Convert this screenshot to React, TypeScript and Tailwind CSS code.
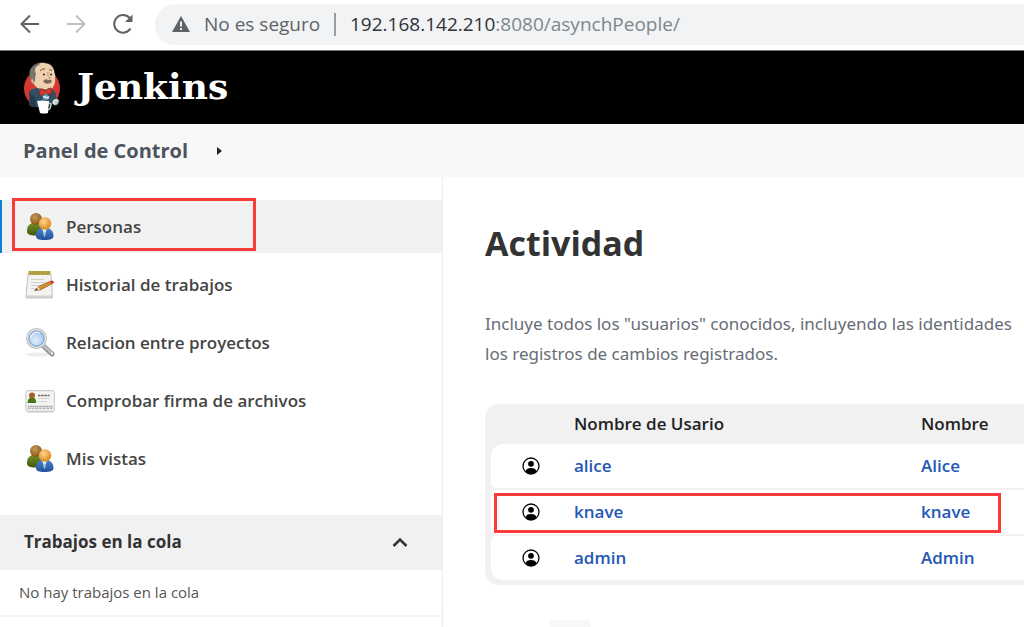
import type { ReactNode } from 'react';

type Task = { label: string; icon: ReactNode; active?: boolean };
type User = { id: string; name: string; highlighted?: boolean };

const PeopleIcon = () => (
  <svg viewBox="0 0 30 30" className="size-[30px] shrink-0" aria-hidden="true">
    <defs>
      <radialGradient id="brownHead" cx="40%" cy="35%" r="65%">
        <stop offset="0" stopColor="#c99a55" />
        <stop offset="1" stopColor="#85561a" />
      </radialGradient>
      <radialGradient id="orangeHead" cx="40%" cy="35%" r="65%">
        <stop offset="0" stopColor="#ffd48a" />
        <stop offset="1" stopColor="#dc8b1c" />
      </radialGradient>
      <linearGradient id="greenBody" x1="0" y1="0" x2="0" y2="1">
        <stop offset="0" stopColor="#73902e" />
        <stop offset="1" stopColor="#3f5a0d" />
      </linearGradient>
      <linearGradient id="blueBody" x1="0" y1="0" x2="0" y2="1">
        <stop offset="0" stopColor="#4f86cc" />
        <stop offset="1" stopColor="#1f519b" />
      </linearGradient>
    </defs>
    <path d="M2 19c0-5 2.500-8 7-8s8 3 8 8c0 3-3 4.500-7.500 4.500S2 22.500 2 19z" fill="url(#greenBody)" />
    <circle cx="11" cy="7" r="6" fill="url(#brownHead)" />
    <path d="M11 24c0-5 3-8.500 8.500-8.500S28.500 19 28.500 24c0 3-3.500 4-9 4s-8.500-1-8.500-4z" fill="url(#blueBody)" />
    <path d="M17 16.500l2.500 7 2.500-7z" fill="#e9f1fb" />
    <path d="M19.500 18l-1 5 1 2 1-2z" fill="#b8cce6" />
    <circle cx="20" cy="11.500" r="6.200" fill="url(#orangeHead)" />
  </svg>
);

const NotepadIcon = () => (
  <svg viewBox="0 0 30 30" className="size-[30px] shrink-0" aria-hidden="true">
    <path d="M3 4h23l1.500 23q0 1-1 1H2q-1 0-1-1z" fill="#f3f3f1" stroke="#c3c3bf" />
    <path d="M1.500 25.500h25.800V28H1.500z" fill="#cfcfcb" />
    <path d="M3.500 1h22v4h-22z" fill="#b9ab4c" />
    <path d="M5 1v3.500M8 1v3.500M11 1v3.500M14 1v3.500M17 1v3.500M20 1v3.500M23 1v3.500" stroke="#9a8e38" />
    <path d="M6 9.500h13M6 12.500h14M6 15.500h9M6 18.500h6" stroke="#d0d1cf" />
    <path d="M9.500 20.500l4-4L26 11l1.500 2.500L15 20z" fill="#d98d32" stroke="#8c5313" strokeWidth=".7" />
    <path d="M9.500 20.500l4-4 1.500 3.500z" fill="#eed3a3" />
    <path d="M9.500 20.500l2.500-2.200.8 1.500z" fill="#333" />
    <path d="M25 11.500l2-1q2 .5 2 2.300l-2 1.200z" fill="#dc3530" />
  </svg>
);

const SearchIcon = () => (
  <svg viewBox="0 0 30 30" className="size-[30px] shrink-0" aria-hidden="true">
    <defs>
      <radialGradient id="glass" cx="45%" cy="60%" r="60%">
        <stop offset="0" stopColor="#e0eefc" />
        <stop offset="1" stopColor="#9abfe9" />
      </radialGradient>
    </defs>
    <ellipse cx="13" cy="26.500" rx="12" ry="2" fill="#ececec" />
    <path d="M18 17.500l9 8.500" stroke="#8c8e8d" strokeWidth="5" strokeLinecap="round" />
    <path d="M19 18l8 7.500" stroke="#bfc1c0" strokeWidth="2.500" strokeLinecap="round" />
    <circle cx="11.500" cy="10.500" r="9" fill="url(#glass)" stroke="#b9bbba" strokeWidth="3" />
    <circle cx="11.500" cy="10.500" r="9" fill="none" stroke="#e2e3e3" strokeWidth="1.400" />
    <circle cx="11.500" cy="10.500" r="7.500" fill="none" stroke="#6d9ed5" strokeWidth=".8" />
    <path d="M6 10a6 6 0 0 1 9-5" fill="none" stroke="#fff" strokeWidth="1.300" opacity=".7" />
    <circle cx="27" cy="25.500" r="1" fill="#fff" />
  </svg>
);

const CardIcon = () => (
  <svg viewBox="0 0 30 30" className="size-[30px] shrink-0" aria-hidden="true">
    <rect x=".8" y="4.500" width="28.800" height="21" rx="2" fill="#ececeb" stroke="#cbcbc9" />
    <path d="M2 26h26.500" stroke="#c9c9c7" />
    <rect x="2" y="6" width="26.500" height="13" fill="#f4f4f3" />
    <path d="M2.500 17c0-3.500 1.500-5.500 4.500-5.500s4.200 2 4.200 5.500z" fill="#4e7418" />
    <circle cx="7" cy="9.500" r="3" fill="#a3651f" />
    <path d="M13 9.500h11.500" stroke="#666" strokeWidth="1.600" strokeDasharray="2.500 .7" />
    <path d="M13.500 12.500h11M13.500 15.500h8" stroke="#d2d2d0" />
    <path d="M3 20.500h24.500" stroke="#9d9d9b" strokeWidth="1.600" strokeDasharray="1.500 .8" />
    <path d="M3 22.300h24.500" stroke="#b0b0ae" strokeWidth="1.300" strokeDasharray="2.500 1.200" />
  </svg>
);

const JenkinsLogo = () => (
  <svg viewBox="0 0 38 52" className="h-[52px] w-[38px] shrink-0" aria-hidden="true">
    <ellipse cx="19" cy="26.500" rx="18" ry="19" fill="#d33833" />
    <path d="M6 30q3-4 9-4l13 1q6 2 5 10l-3 4q-1 4-8 4H10q-3 0-4-3 2-6 0-12z" fill="#2f5064" />
    <path d="M6 31l6 4 1 10q-5 1-6-3z" fill="#213d4e" />
    <path d="M10 20Q6 12 9 6q4-6 12-5 8 0 10 7 2 6 1 12-1 7-7 8l-7-1q-6-1-8-7z" fill="#efd0ae" />
    <path d="M10 21Q5 14 7 8q2-5 8-7l2 1-4 3q-2 3 0 7l-1 4q1 3-2 5z" fill="#77736d" />
    <path d="M7 8q3-6 11-7.500 10-1 13 7" fill="none" stroke="#3e3833" strokeWidth=".7" />
    <path d="M17 9q2-3 5-2M26 8q2-1 3 1" fill="none" stroke="#453728" strokeWidth=".8" />
    <path d="M20 12.500h2M27 12.500h2" stroke="#2c2926" strokeWidth="1.300" />
    <path d="M25 10q-1 4 1 5 3 1 0 2" fill="none" stroke="#a37c5f" strokeWidth=".8" />
    <path d="M20 19q3-3 5-1 3-1 4 1-1 3-4 2.500-3 1-5-2.500z" fill="#7a675a" />
    <path d="M10 17q-3-1-2 2 1 3 3 3" fill="#e3bb96" stroke="#a37c5f" strokeWidth=".7" />
    <path d="M16 28l4 8 5-4 3-4q-5 2-12 0z" fill="#eef2f3" />
    <path d="M17 27q3-1 5 2 3-3 6-3l1 6q-3 1-6-1-3 3-7 2z" fill="#d33833" stroke="#701f1c" strokeWidth=".7" />
    <path d="M19 34q4-3 8 0l-1 4h-6z" fill="#81b0c4" stroke="#203b4b" strokeWidth=".7" />
    <path d="M20 35l2-1 1 2 3-1" fill="none" stroke="#fff" />
    <path d="M14 39q5-1 12 0l-1 12q-4 1-8 0z" fill="#fff" />
    <path d="M26 41l2 1q0 5-3 6" fill="none" stroke="#d9dedf" strokeWidth="1.300" />
    <path d="M30 38q5-3 6 1-1 5-5 4l-2-2z" fill="#e9edee" stroke="#51616b" strokeWidth=".7" />
    <path d="M31 40h4M32 42h3" stroke="#77848b" strokeWidth=".6" />
  </svg>
);

const PersonIcon = () => (
  <svg viewBox="0 0 18 18" className="size-[18px]" aria-hidden="true">
    <circle cx="9" cy="9" r="8" fill="#fff" stroke="#000" strokeWidth="1.300" />
    <circle cx="9" cy="6.800" r="2.900" />
    <path d="M3.400 14.500C4 12 6 11 9 11s5 1 5.600 3.500Q12 17 9 17t-5.600-2.500z" />
  </svg>
);

const TASKS: Task[] = [
  { label: 'Personas', icon: <PeopleIcon />, active: true },
  { label: 'Historial de trabajos', icon: <NotepadIcon /> },
  { label: 'Relacion entre proyectos', icon: <SearchIcon /> },
  { label: 'Comprobar firma de archivos', icon: <CardIcon /> },
  { label: 'Mis vistas', icon: <PeopleIcon /> },
];

const USERS: User[] = [
  { id: 'alice', name: 'Alice' },
  { id: 'knave', name: 'knave', highlighted: true },
  { id: 'admin', name: 'Admin' },
];

const BrowserBar = () => (
  <div className="flex h-[51px] shrink-0 items-center border-b border-[#777] bg-white pb-[2px] text-[#5f6368]">
    <button type="button" aria-label="Atrás" className="ml-5">
      <svg viewBox="0 0 20 20" className="size-5 fill-none stroke-current stroke-2">
        <path d="M19 10H2M10 1.500L1.500 10l8.500 8.500" />
      </svg>
    </button>
    <button type="button" aria-label="Adelante" className="ml-[26px] text-[#bdbfc1]">
      <svg viewBox="0 0 20 20" className="size-5 fill-none stroke-current stroke-2">
        <path d="M1 10h17M10 1.500l8.500 8.500-8.500 8.500" />
      </svg>
    </button>
    <button type="button" aria-label="Recargar" className="ml-[26px]">
      <svg viewBox="0 0 22 22" className="size-[22px]">
        <path d="M18.500 15.500A8.800 8.800 0 1 1 17.600 5" fill="none" stroke="currentColor" strokeWidth="2" />
        <path d="M20.500 1.500v7.500H13z" fill="currentColor" />
      </svg>
    </button>
    <div className="ml-[21px] flex h-[41px] flex-1 items-center rounded-l-full bg-[#f1f3f4] pl-[17px] text-[19px] whitespace-nowrap">
      <svg viewBox="0 0 18 16" className="h-4 w-[18px]" aria-hidden="true">
        <path d="M9 0l9 16H0z" fill="#5f6368" />
        <path d="M9 5.500v5M9 12v2" stroke="#fff" strokeWidth="1.800" />
      </svg>
      <span className="ml-[14px] w-[120px]">No es seguro</span>
      <span className="ml-[10px] h-[23px] w-[2px] bg-[#9a9da0]" />
      <span className="ml-[14px] text-[#80868b]">
        <span className="text-[#303236]">192.168.142.210</span>:8080/asynchPeople/
      </span>
    </div>
  </div>
);

const Sidebar = () => (
  <aside className="w-[443px] shrink-0 border-r border-[#ececec] pt-[23px]">
    <nav className="flex flex-col gap-[5px]">
      {TASKS.map(({ label, icon, active }) => (
        <a
          key={label}
          href="#"
          className={`relative flex h-[53px] items-center gap-[11px] pt-px pl-[25px] text-[17px] font-semibold text-[#444] ${
            active ? 'bg-[#f1f1f1]' : ''
          }`}
        >
          {active && <span className="absolute inset-y-0 left-0 w-[2px] bg-[#0b83d0]" />}
          {icon}
          {label}
          {active && (
            <span className="absolute -top-[2px] left-3 h-[53px] w-[244px] border-3 border-[#fb3a3a]" />
          )}
        </a>
      ))}
    </nav>
    <section className="mt-[30px]">
      <div className="flex h-[55px] items-center justify-between bg-[#f1f1f1] pr-[34px] pb-px pl-6">
        <h2 className="text-[17px] font-bold text-[#333]">Trabajos en la cola</h2>
        <button type="button" aria-label="Contraer">
          <svg viewBox="0 0 16 16" className="size-4 fill-none stroke-[#333] stroke-[2.5]">
            <path d="M1.500 12L8 5.500l6.500 6.500" />
          </svg>
        </button>
      </div>
      <p className="flex h-[47px] items-center border-b-2 border-[#f4f4f4] pl-[19px] text-[15px] text-[#555]">
        No hay trabajos en la cola
      </p>
    </section>
  </aside>
);

const PeopleTable = () => (
  <div className="-mr-10 w-[640px] min-w-full rounded-[14px] bg-[#f1f1f1] pb-[3px] pl-[6px]">
    <table className="w-full table-fixed border-separate border-spacing-x-0 border-spacing-y-[2px] text-left text-[17px]">
      <colgroup>
        <col className="w-[83px]" />
        <col className="w-[347px]" />
        <col />
      </colgroup>
      <thead>
        <tr className="h-9 text-[#222]">
          <th aria-label="Usuario" />
          <th className="font-semibold">Nombre de Usario</th>
          <th className="font-semibold">Nombre</th>
        </tr>
      </thead>
      <tbody>
        {USERS.map(({ id, name, highlighted }) => (
          <tr key={id} className="group relative h-11 font-semibold text-[#2457b5]">
            <td className="rounded-l-[5px] bg-white pl-[31px] group-first:rounded-tl-xl group-last:rounded-bl-xl">
              <PersonIcon />
              {highlighted && (
                <span className="absolute top-[3px] left-[3px] h-10 w-[507px] border-3 border-[#fb3a3a]" />
              )}
            </td>
            <td className="bg-white">
              <a href="#">{id}</a>
            </td>
            <td className="bg-white">
              <a href="#">{name}</a>
            </td>
          </tr>
        ))}
      </tbody>
    </table>
  </div>
);

export default function App() {
  return (
    <div className="flex h-screen flex-col overflow-hidden bg-white font-['Open_Sans','Noto_Sans',sans-serif]">
      <BrowserBar />
      <header className="flex h-[73px] shrink-0 items-center bg-black pl-[23px]">
        <a href="#" className="flex items-center gap-[16px]">
          <JenkinsLogo />
          <span className="pb-1 font-['DejaVu_Serif',serif] text-[36px] leading-none font-bold text-white">
            Jenkins
          </span>
        </a>
      </header>
      <nav className="flex h-[53px] shrink-0 items-center bg-[#f8f8f8] pl-[23px]">
        <a href="#" className="text-[20px] font-bold text-[#4d545d]">
          Panel de Control
        </a>
        <svg viewBox="0 0 5 8" className="ml-[29px] h-2 w-[5px]" aria-hidden="true">
          <path d="M0 0l5 4-5 4z" fill="#222" />
        </svg>
      </nav>
      <div className="flex flex-1">
        <Sidebar />
        <main className="min-w-0 flex-1 pt-10 pl-[42px]">
          <h1 className="text-[34px] leading-[52px] font-bold text-[#333]">Actividad</h1>
          <p className="mt-10 mb-[35px] font-['Noto_Sans',sans-serif] text-[17px] leading-[30px] whitespace-nowrap text-[#676d76]">
            Incluye todos los "usuarios" conocidos, incluyendo las identidades
            <br />
            los registros de cambios registrados.
          </p>
          <PeopleTable />
          <div className="mt-[35px] ml-[65px] h-8 w-[41px] rounded bg-[#f7f7f7]" />
        </main>
      </div>
    </div>
  );
}
